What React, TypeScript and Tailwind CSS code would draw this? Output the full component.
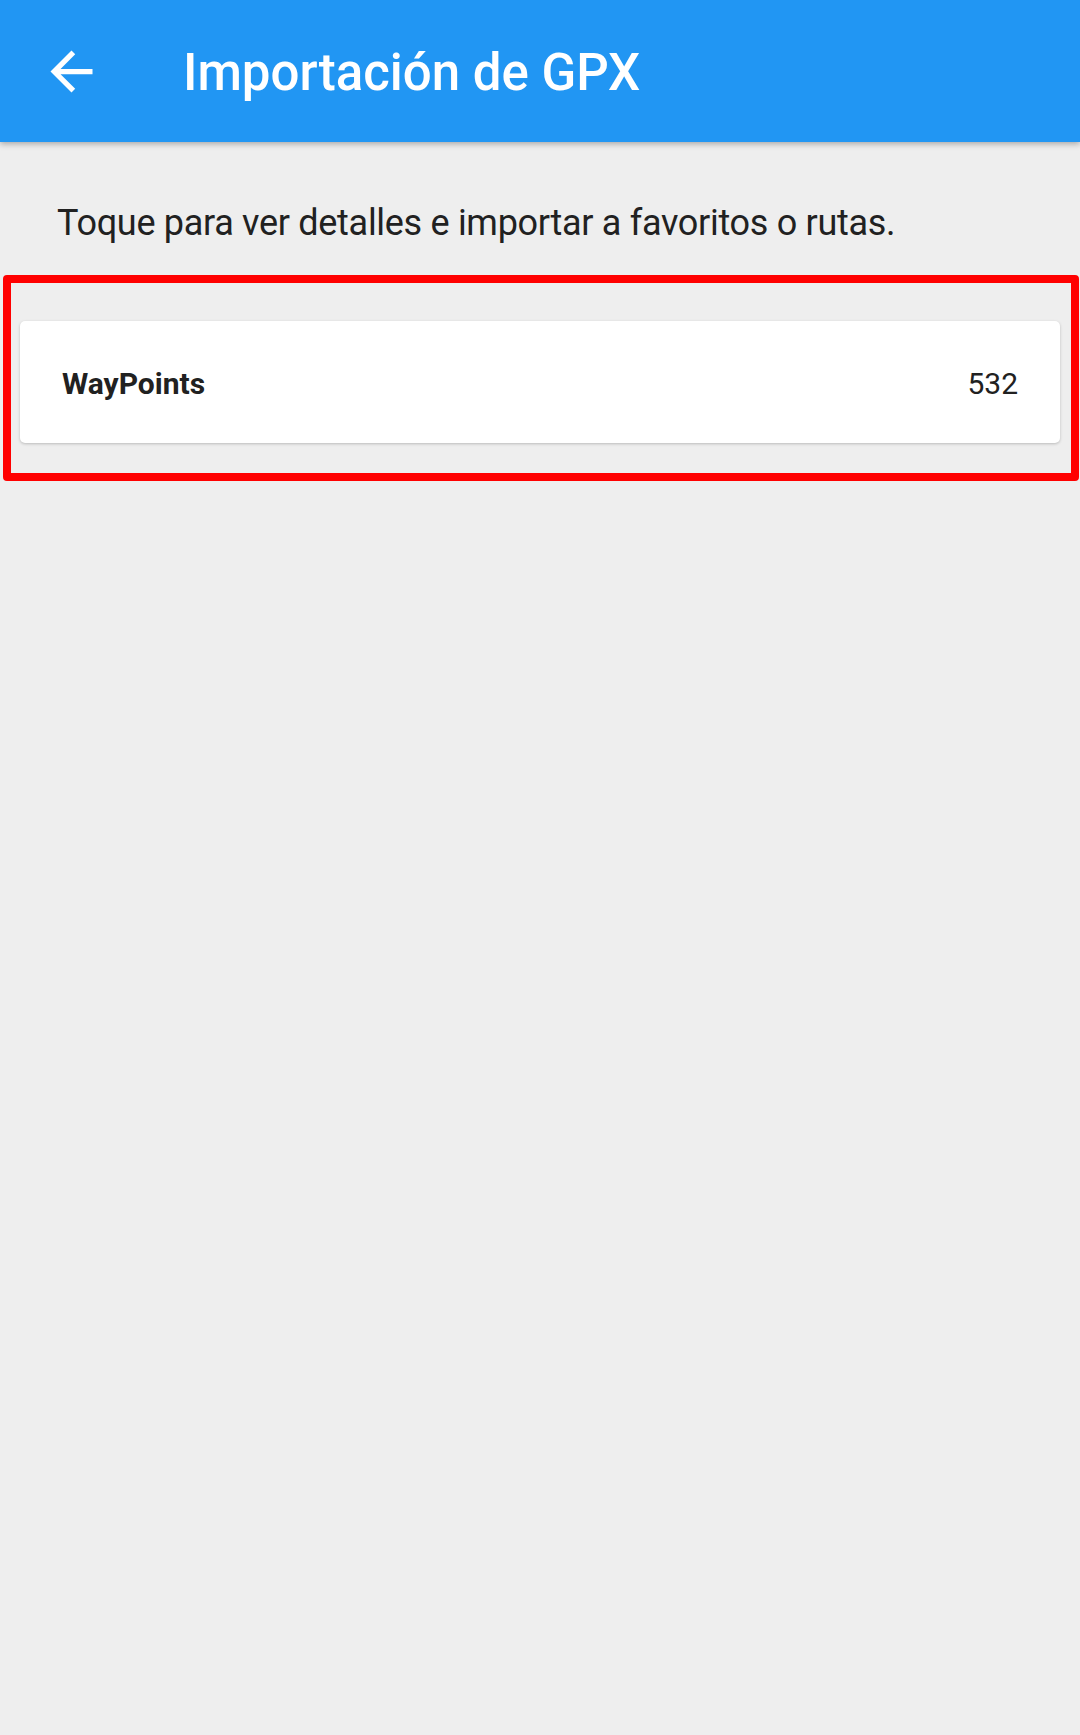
export default function App() {
  return (
    <div className="min-h-[1735px] w-full bg-[#eeeeee] font-['Roboto',sans-serif]">
      <header className="relative z-10 flex h-[142px] items-center bg-[#2196f3] pl-[40px] shadow-[0_2px_6px_rgba(0,0,0,0.3)]">
        <svg width="63" height="63" viewBox="0 0 24 24" className="shrink-0">
          <path
            d="M20 11H7.83l5.59-5.59L12 4l-8 8 8 8 1.41-1.41L7.83 13H20v-2z"
            fill="#ffffff"
          />
        </svg>
        <h1 className="ml-[80px] mt-[2px] text-[51px] font-medium leading-[61px] text-white">
          Importación de GPX
        </h1>
      </header>

      <p className="mt-[60px] pl-[57px] text-[36px] leading-[43px] tracking-[-0.3px] text-[#212121]">
        Toque para ver detalles e importar a favoritos o rutas.
      </p>

      <div className="mt-[30px] ml-[3px] mr-[1px] rounded-[4px] border-[8px] border-[#ff0000] pl-[9px] pr-[11px] pt-[38px] pb-[30px]">
        <div className="flex h-[122px] items-center justify-between rounded-[5px] bg-white px-[42px] shadow-[0_1px_3px_rgba(0,0,0,0.22)]">
          <span className="mt-[2px] text-[30px] font-bold leading-[37px] text-[#212121]">
            WayPoints
          </span>
          <span className="mt-[2px] text-[30px] leading-[37px] text-[#212121]">532</span>
        </div>
      </div>
    </div>
  );
}
